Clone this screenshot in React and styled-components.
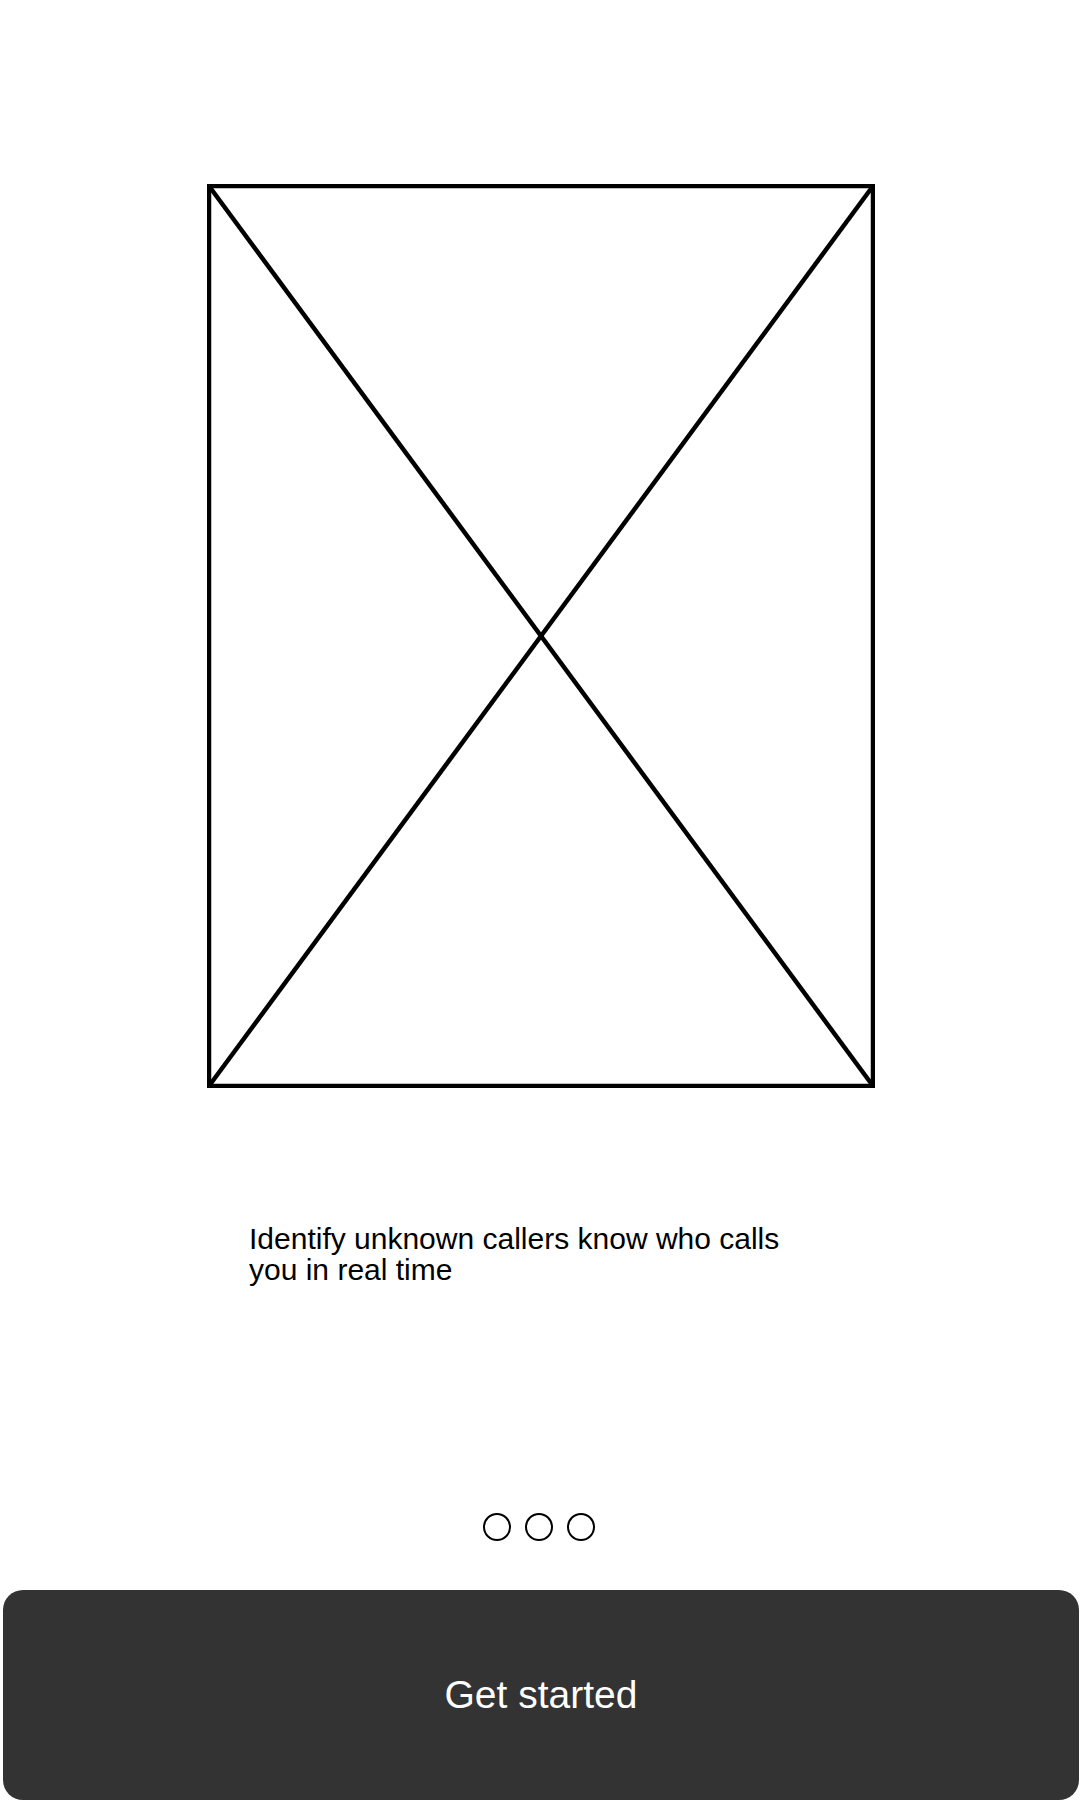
import styled, { createGlobalStyle } from 'styled-components'

const GlobalStyle = createGlobalStyle`
  html, body {
    margin: 0;
    padding: 0;
    background: #ffffff;
  }
  body {
    font-family: "Liberation Sans", Arial, sans-serif;
  }
`

const Screen = styled.div`
  width: 1080px;
  height: 1800px;
  display: flex;
  flex-direction: column;
  align-items: center;
  padding-top: 184px;
  box-sizing: border-box;
  background: #fff;
  overflow: hidden;
`

const Illustration = styled.svg`
  display: block;
  width: 668px;
  height: 904px;
  margin-left: 2px;
`

const Caption = styled.p`
  width: 582px;
  margin: 135px 0 0;
  font-size: 30px;
  line-height: 31px;
  color: #000;
`

const Dots = styled.div`
  display: flex;
  gap: 14px;
  margin-top: 228px;
  margin-right: 3px;
`

const Dot = styled.span`
  width: 28px;
  height: 28px;
  box-sizing: border-box;
  border: 2.7px solid #000;
  border-radius: 50%;
  background: ${p => (p.$active ? '#000' : 'transparent')};
`

const StartButton = styled.button`
  align-self: stretch;
  margin: 49px 1px 0 3px;
  height: 210px;
  border: none;
  border-radius: 20px;
  background: #333333;
  color: #ffffff;
  font-family: "Liberation Sans", Arial, sans-serif;
  font-size: 39px;
  cursor: pointer;
`

const Placeholder = () => (
  <Illustration viewBox="0 0 668 904">
    <g stroke="#000" strokeWidth="4.5" fill="none">
      <rect x="2" y="2" width="664" height="900" />
      <line x1="2" y1="2" x2="666" y2="902" />
      <line x1="666" y1="2" x2="2" y2="902" />
    </g>
  </Illustration>
)

export default function App() {
  return (
    <>
      <GlobalStyle />
      <Screen>
        <Placeholder />
        <Caption>Identify unknown callers know who calls you in real time</Caption>
        <Dots>
          <Dot />
          <Dot />
          <Dot />
        </Dots>
        <StartButton>Get started</StartButton>
      </Screen>
    </>
  )
}
